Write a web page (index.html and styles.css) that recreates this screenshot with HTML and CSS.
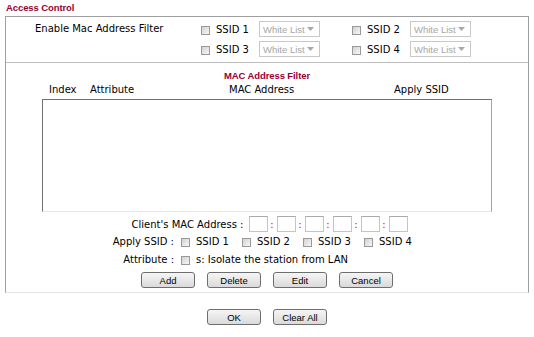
FILE: index.html
```html
<!DOCTYPE html>
<html lang="en">
<head>
    <meta charset="UTF-8">
    <meta name="viewport" content="width=device-width, initial-scale=1.0">
    <title>Access Control</title>
    <link rel="stylesheet" href="styles.css">
</head>
<body>
    <div class="page-title">Access Control</div>

    <div class="panel">
        <!-- SSID filter switches -->
        <div class="filter-grid">
            <div class="filter-label">Enable Mac Address Filter</div>
            <label class="ssid-pick"><input type="checkbox" class="cb"><span class="name">SSID 1</span>
                <span class="select">White List<svg viewBox="0 0 7 4"><path d="M0 0h7L3.5 4z"/></svg></span></label>
            <label class="ssid-pick"><input type="checkbox" class="cb"><span class="name">SSID 2</span>
                <span class="select">White List<svg viewBox="0 0 7 4"><path d="M0 0h7L3.5 4z"/></svg></span></label>
            <label class="ssid-pick"><input type="checkbox" class="cb"><span class="name">SSID 3</span>
                <span class="select">White List<svg viewBox="0 0 7 4"><path d="M0 0h7L3.5 4z"/></svg></span></label>
            <label class="ssid-pick"><input type="checkbox" class="cb"><span class="name">SSID 4</span>
                <span class="select">White List<svg viewBox="0 0 7 4"><path d="M0 0h7L3.5 4z"/></svg></span></label>
        </div>

        <!-- MAC list -->
        <div class="filter-list">
            <div class="list-title">MAC Address Filter</div>
            <div class="list-head">
                <span class="col-index">Index</span>
                <span class="col-attr">Attribute</span>
                <span class="col-mac">MAC Address</span>
                <span>Apply SSID</span>
            </div>
            <div class="list-box"></div>

            <div class="mac-row">
                <span class="mac-label">Client's MAC Address :</span>
                <input type="text" class="mac-part"><span class="mac-sep">:</span>
                <input type="text" class="mac-part"><span class="mac-sep">:</span>
                <input type="text" class="mac-part"><span class="mac-sep">:</span>
                <input type="text" class="mac-part"><span class="mac-sep">:</span>
                <input type="text" class="mac-part"><span class="mac-sep">:</span>
                <input type="text" class="mac-part">
            </div>

            <div class="opt-grid">
                <span class="row-label">Apply SSID :</span>
                <div class="opts">
                    <label class="opt"><input type="checkbox" class="cb">SSID 1</label>
                    <label class="opt"><input type="checkbox" class="cb">SSID 2</label>
                    <label class="opt"><input type="checkbox" class="cb">SSID 3</label>
                    <label class="opt"><input type="checkbox" class="cb">SSID 4</label>
                </div>
                <span class="row-label">Attribute :</span>
                <div class="opts">
                    <label class="opt"><input type="checkbox" class="cb">s: Isolate the station from LAN</label>
                </div>
            </div>

            <div class="btn-row">
                <button class="btn">Add</button>
                <button class="btn">Delete</button>
                <button class="btn">Edit</button>
                <button class="btn">Cancel</button>
            </div>
        </div>
    </div>

    <div class="btn-row bottom">
        <button class="btn">OK</button>
        <button class="btn">Clear All</button>
    </div>
</body>
</html>
```

FILE: styles.css
```css
* {
    box-sizing: border-box;
    margin: 0;
    padding: 0;
}

body {
    font-family: "DejaVu Sans", Verdana, sans-serif;
    font-size: 10px;
    color: #000;
    background: #fff;
}

/* Titles */
.page-title {
    height: 16px;
    padding-left: 6px;
    font: bold 9.5px/16px "Liberation Sans", Arial, sans-serif;
    letter-spacing: -0.1px;
    color: #990033;
}

.panel {
    margin: 0 5px;
    border: 1px solid #a0a0a0;
    border-bottom-color: #e4e4e4;
}

/* Enable filter block */
.filter-grid {
    display: grid;
    grid-template-columns: 166px 151px 151px;
    grid-auto-rows: 20px;
    padding: 2px 0 3px 29px;
    border-bottom: 1px solid #bdbdbd;
}

.filter-label {
    grid-row: span 2;
    line-height: 20px;
}

.ssid-pick {
    display: flex;
    align-items: center;
}

.ssid-pick .name {
    width: 43px;
}

.cb {
    appearance: none;
    -webkit-appearance: none;
    flex: none;
    width: 9px;
    height: 9px;
    margin: 2px 6px 0 0;
    border: 1px solid #999;
    background: linear-gradient(135deg, #d2d2d2, #f7f7f7);
}

.select {
    display: flex;
    align-items: center;
    justify-content: space-between;
    width: 61px;
    height: 16px;
    padding: 0 5px 0 3px;
    border: 1px solid #c8c8c8;
    font: 9.5px "Liberation Sans", Arial, sans-serif;
    color: #a6a6a6;
}

.select svg {
    width: 7px;
    height: 4px;
    fill: #a8a8a8;
}

/* MAC list block */
.list-title {
    margin-top: 7px;
    text-align: center;
    font: bold 9.5px/12px "Liberation Sans", Arial, sans-serif;
    letter-spacing: -0.1px;
    color: #990033;
}

.list-head {
    display: flex;
    margin: 2px 36px 0;
    padding-left: 7px;
    line-height: 12px;
}

.col-index { width: 41px; }
.col-attr { width: 139px; }
.col-mac { width: 165px; }

.list-box {
    height: 113px;
    margin: 3px 36px 0;
    border: 1px solid;
    border-color: #707070 #a4a4a4 #e6e6e6 #707070;
}

.mac-row {
    display: flex;
    justify-content: center;
    align-items: center;
    height: 16px;
    margin-top: 4px;
}

.mac-label {
    width: 117px;
    margin-right: 5px;
    text-align: right;
}

.mac-part {
    width: 19px;
    height: 16px;
    border: 1px solid #c4c4c4;
    border-top-color: #a9a9a9;
    outline: none;
}

.mac-sep {
    width: 9px;
    text-align: center;
    color: #cc0033;
}

.opt-grid {
    display: grid;
    grid-template-columns: 168px auto;
    grid-auto-rows: 18px;
    align-items: center;
}

.row-label {
    text-align: right;
}

.opts {
    display: flex;
    align-items: center;
    padding-left: 7px;
}

.opt {
    display: flex;
    align-items: center;
    width: 61px;
}

.opt:last-child {
    width: auto;
}

/* Buttons */
.btn-row {
    display: flex;
    justify-content: center;
    gap: 12px;
    margin-top: 4px;
    padding-bottom: 4px;
}

.btn-row.bottom {
    margin-top: 16px;
    padding-bottom: 0;
}

.btn {
    width: 54px;
    height: 16px;
    border: 1px solid #6e6e6e;
    border-radius: 3px;
    background: linear-gradient(#f5f5f5, #dadada);
    font: 9.5px "Liberation Sans", Arial, sans-serif;
    color: #000;
}
```
